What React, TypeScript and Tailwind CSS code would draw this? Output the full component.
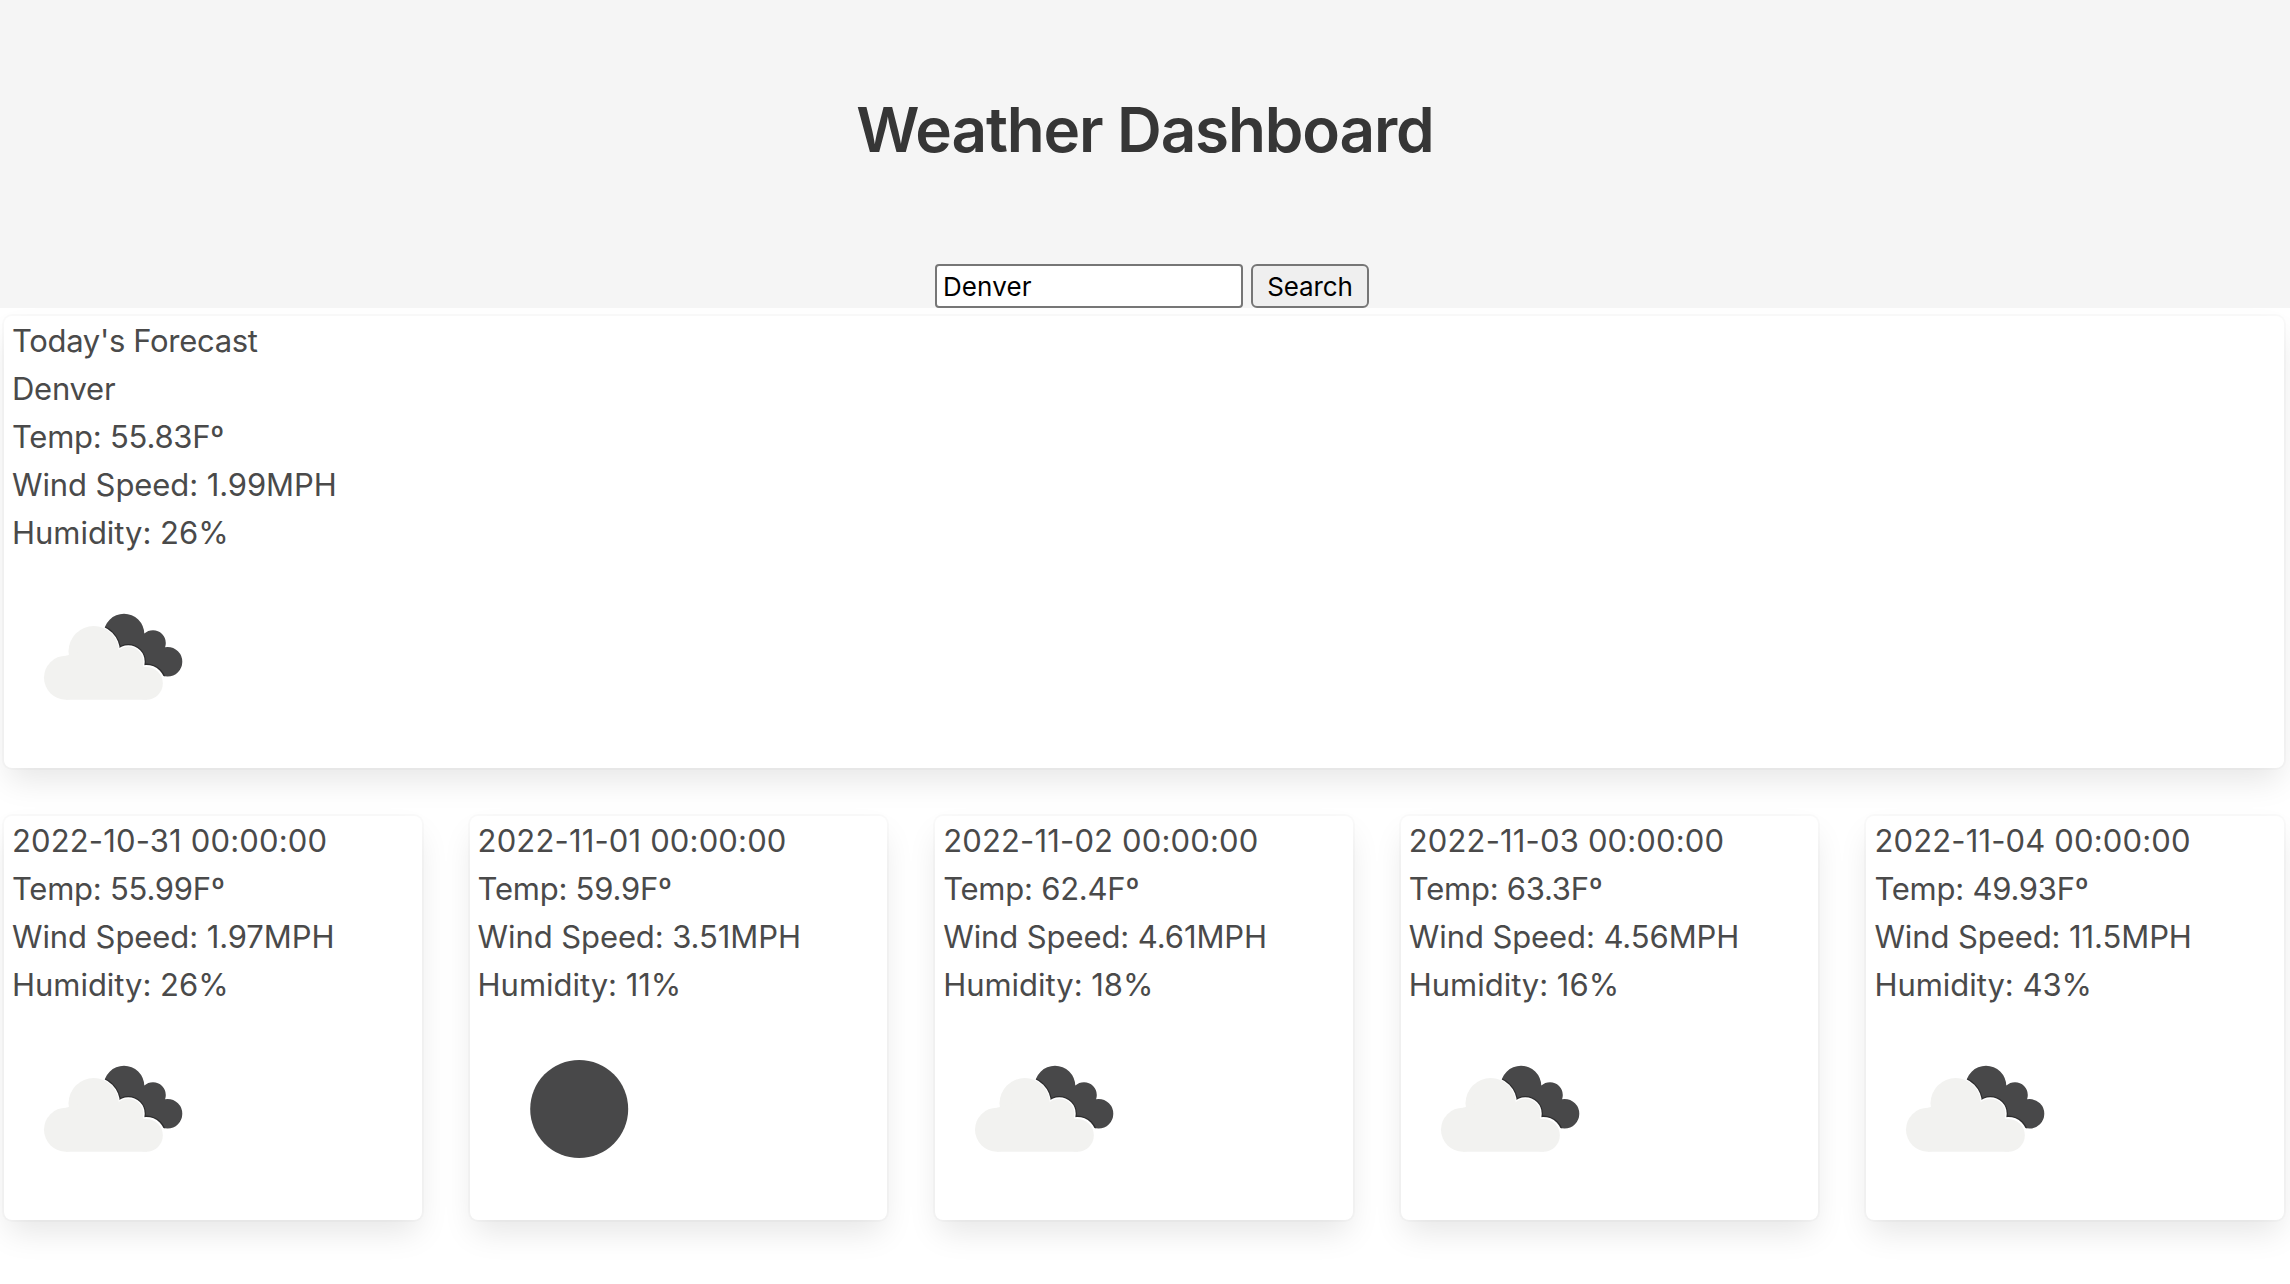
import React from "react";

type Icon = "clouds" | "clear";
type Forecast = { date: string; city?: string; temp: string; wind: string; humidity: string; icon: Icon };

const today: Forecast = { date: "Today's Forecast", city: "Denver", temp: "55.83", wind: "1.99", humidity: "26", icon: "clouds" };

const days: Forecast[] = [
  { date: "2022-10-31 00:00:00", temp: "55.99", wind: "1.97", humidity: "26", icon: "clouds" },
  { date: "2022-11-01 00:00:00", temp: "59.9", wind: "3.51", humidity: "11", icon: "clear" },
  { date: "2022-11-02 00:00:00", temp: "62.4", wind: "4.61", humidity: "18", icon: "clouds" },
  { date: "2022-11-03 00:00:00", temp: "63.3", wind: "4.56", humidity: "16", icon: "clouds" },
  { date: "2022-11-04 00:00:00", temp: "49.93", wind: "11.5", humidity: "43", icon: "clouds" },
];

function WeatherIcon({ icon }: { icon: Icon }) {
  const clipId = React.useId();
  if (icon === "clear") {
    return (
      <svg className="-mt-px block size-[200px]" viewBox="0 0 200 200">
        <circle cx="101.2" cy="101" r="49" fill="#484849" />
      </svg>
    );
  }
  return (
    <svg className="-mt-px block size-[200px]" viewBox="0 0 200 200">
      <clipPath id={clipId}>
        <circle cx="112" cy="78" r="20.3" />
        <circle cx="141" cy="87" r="12.8" />
        <circle cx="155.5" cy="105.8" r="14.8" />
        <path d="M112 78 L141 80 L156 106 L154 120 L130 112 L108 92 Z" />
      </clipPath>
      <g clipPath={`url(#${clipId})`}>
        <rect x="85" y="50" width="90" height="80" fill="#484849" />
        <g fill="#2c2c2d">
          <circle cx="81.7" cy="95.3" r="27.4" />
          <circle cx="116.3" cy="105.7" r="17.6" />
          <circle cx="134.3" cy="127.8" r="20.2" />
        </g>
      </g>
      <g fill="#ffffff">
        <circle cx="81.7" cy="95.3" r="26.2" />
        <circle cx="116.3" cy="105.7" r="16.4" />
        <circle cx="134.3" cy="127.8" r="18.9" />
      </g>
      <g fill="#f2f2f0">
        <circle cx="54" cy="121.7" r="22" />
        <circle cx="81.7" cy="95.3" r="25.2" />
        <circle cx="116.3" cy="105.7" r="15" />
        <circle cx="134.4" cy="127.3" r="16.4" />
        <path d="M54 143.7 V99.7 L82 92 L116 100 L135 113 V143.7 Z" />
      </g>
    </svg>
  );
}

function ForecastCard({ forecast }: { forecast: Forecast }) {
  return (
    <article className="rounded-lg bg-white px-2 pt-px pb-3 text-[31px] leading-[48px] text-[#4a4a4a] shadow-[0_16px_32px_-4px_rgba(10,10,10,0.1),0_0_0_2px_rgba(10,10,10,0.02)]">
      <p className={forecast.city ? "tracking-[-0.32px]" : "tracking-[0.15px]"}>{forecast.date}</p>
      {forecast.city && <p className="tracking-[-0.25px]">{forecast.city}</p>}
      <p className="tracking-[-0.24px]">Temp: {forecast.temp}Fº</p>
      <p className="tracking-[-0.09px]">Wind Speed: {forecast.wind}MPH</p>
      <p className="tracking-[-0.03px]">Humidity: {forecast.humidity}%</p>
      <WeatherIcon icon={forecast.icon} />
    </article>
  );
}

export default function App() {
  return (
    <div className="h-[1284px] overflow-hidden bg-white font-['Inter',sans-serif]">
      <header className="flex h-[308px] flex-col items-center justify-between bg-[#f5f5f5] pt-[94px]">
        <h1 className="text-[62px] leading-[72px] font-semibold tracking-[-1.15px] text-[#363636]">Weather Dashboard</h1>
        <form className="flex gap-2 pl-[14px] text-[26px] text-black" onSubmit={(e) => e.preventDefault()}>
          <input
            className="h-11 w-[308px] rounded-[4px] border-2 border-[#767676] bg-white px-[6px] tracking-[0.1px] outline-none"
            defaultValue="Denver"
          />
          <button className="h-11 w-[118px] rounded-[6px] border-2 border-[#767676] bg-[#efefef] tracking-[-0.1px]">Search</button>
        </form>
      </header>
      <main className="flex flex-col gap-12 pt-2 pr-[6px] pl-1">
        <ForecastCard forecast={today} />
        <section className="grid grid-cols-5 gap-12">
          {days.map((day) => (
            <ForecastCard key={day.date} forecast={day} />
          ))}
        </section>
      </main>
    </div>
  );
}
